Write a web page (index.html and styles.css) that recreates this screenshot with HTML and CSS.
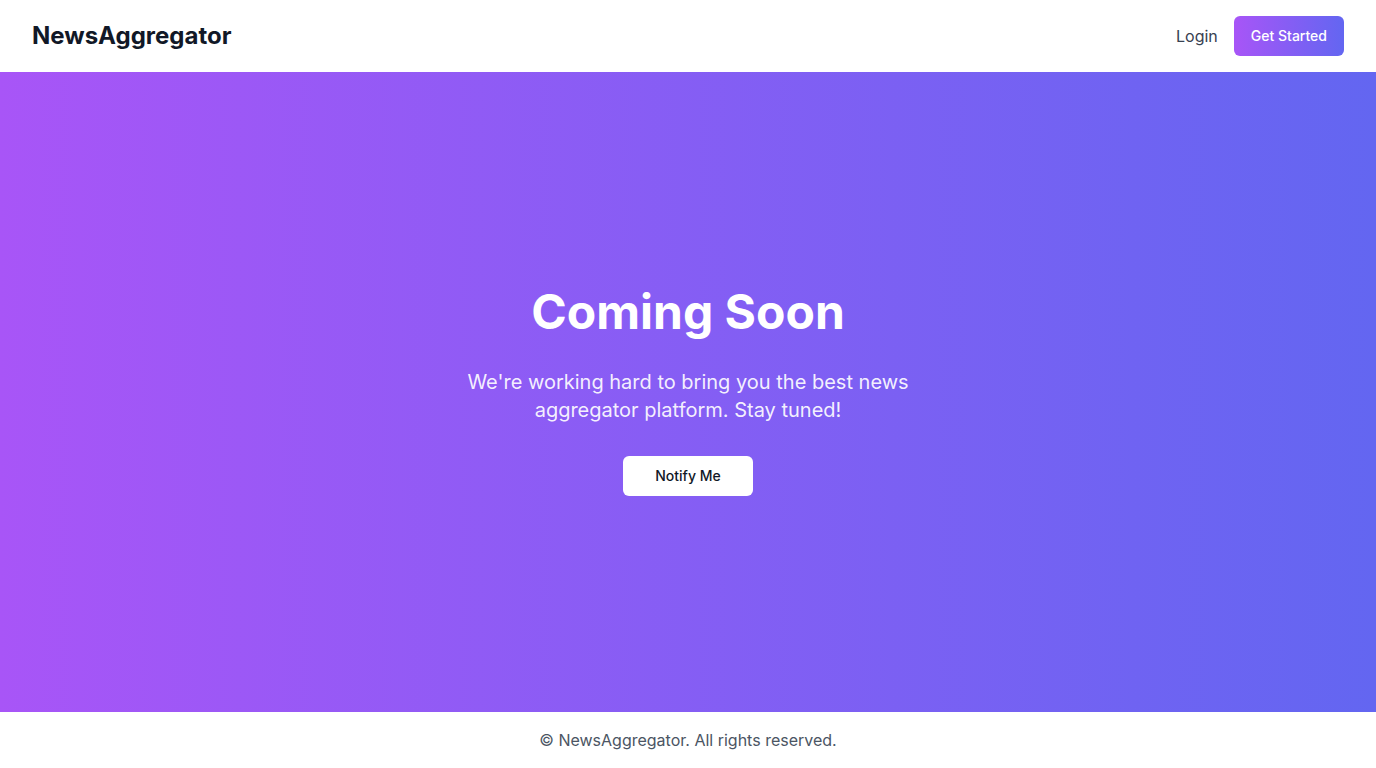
FILE: index.html
```html
<!DOCTYPE html>
<html lang="en">
<head>
<meta charset="utf-8">
<title>NewsAggregator</title>
<link rel="stylesheet" href="styles.css">
</head>
<body>
<div class="page">
  <header class="header">
    <div class="logo">NewsAggregator</div>
    <nav class="nav">
      <a class="login" href="#">Login</a>
      <a class="btn-start" href="#">Get Started</a>
    </nav>
  </header>
  <main class="hero">
    <div class="hero-inner">
      <h1 class="title">Coming Soon</h1>
      <p class="lead">We're working hard to bring you the best news aggregator platform. Stay tuned!</p>
      <button class="btn-notify">Notify Me</button>
    </div>
  </main>
  <footer class="footer">© NewsAggregator. All rights reserved.</footer>
</div>
</body>
</html>
```
FILE: styles.css
```css
* { box-sizing: border-box; }
html, body { margin: 0; padding: 0; }
body {
  font-family: Inter, "Noto Sans", sans-serif;
  color: #111827;
  background: #fff;
}
.page {
  display: flex;
  flex-direction: column;
  height: 768px;
}
.header {
  height: 72px;
  display: flex;
  align-items: center;
  justify-content: space-between;
  padding: 0 32px;
  background: #fff;
}
.logo {
  font-size: 24px;
  font-weight: 700;
  color: #111827;
  line-height: 32px;
}
.nav {
  display: flex;
  align-items: center;
  gap: 16px;
}
.login {
  font-size: 16px;
  color: #374151;
  text-decoration: none;
  line-height: 24px;
}
.btn-start {
  display: inline-block;
  padding: 10px 17px;
  font-size: 14px;
  font-weight: 500;
  line-height: 20px;
  color: #fff;
  text-decoration: none;
  border-radius: 6px;
  background: linear-gradient(to right, #a855f7, #6366f1);
}
.hero {
  flex: 1;
  display: flex;
  align-items: center;
  justify-content: center;
  background: linear-gradient(to right, #a855f7, #6366f1);
  color: #fff;
  text-align: center;
}
.hero-inner {
  display: flex;
  flex-direction: column;
  align-items: center;
}
.title {
  margin: 0 0 32px;
  font-size: 48px;
  line-height: 48px;
  font-weight: 700;
}
.lead {
  margin: 0 0 32px;
  max-width: 448px;
  font-size: 20px;
  line-height: 28px;
  color: rgba(255,255,255,0.92);
}
.btn-notify {
  font-family: inherit;
  border: 0;
  background: #fff;
  color: #111827;
  font-size: 14px;
  font-weight: 500;
  line-height: 20px;
  padding: 10px 32px;
  border-radius: 6px;
  cursor: pointer;
}
.footer {
  height: 56px;
  display: flex;
  align-items: center;
  justify-content: center;
  font-size: 16px;
  color: #4b5563;
  background: #fff;
}
```
